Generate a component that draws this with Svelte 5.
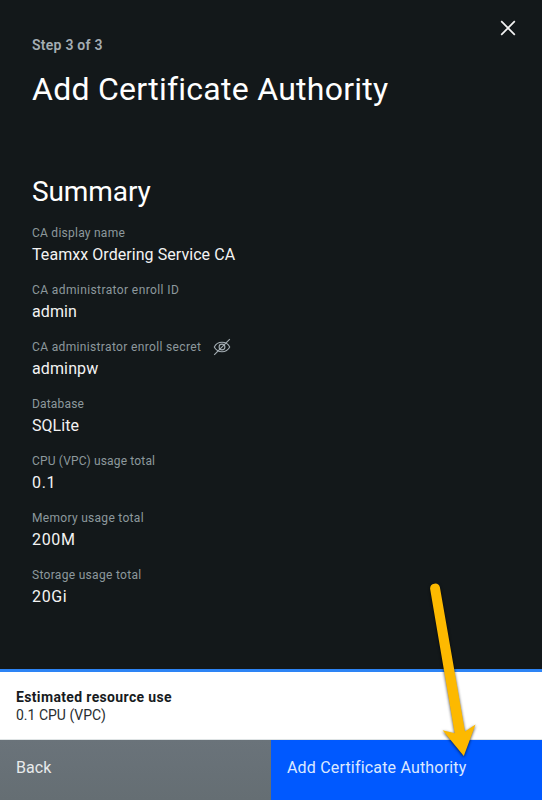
<script>
  const details = [
    { label: 'CA display name', value: 'Teamxx Ordering Service CA', ls: 0.25, vs: 0.06 },
    { label: 'CA administrator enroll ID', value: 'admin', ls: 0.4, vs: 0.1 },
    { label: 'CA administrator enroll secret', value: 'adminpw', ls: 0.35, vs: 0.12, hidden: true },
    { label: 'Database', value: 'SQLite', ls: 0.17, vs: 0.05 },
    { label: 'CPU (VPC) usage total', value: '0.1', ls: 0.16, vs: 0.7 },
    { label: 'Memory usage total', value: '200M', ls: 0.3, vs: 0.65 },
    { label: 'Storage usage total', value: '20Gi', ls: 0.31, vs: 0.65 }
  ];
</script>

<div class="panel">
  <main>
    <button class="close" aria-label="Close">
      <svg width="16" height="16" viewBox="0 0 16 16"><path d="M1.2 1.2 14.8 14.8M14.8 1.2 1.2 14.8" /></svg>
    </button>
    <p class="step">Step 3 of 3</p>
    <h1>Add Certificate Authority</h1>
    <h2>Summary</h2>
    <dl>
      {#each details as d}
        <div class="item">
          <dt>
            <span style="letter-spacing: {d.ls}px">{d.label}</span>
            {#if d.hidden}
              <svg class="eye" width="18" height="18" viewBox="0 0 18 18">
                <path d="M1.3 9C4.5 2.7 13.5 2.7 16.7 9 13.5 15.3 4.5 15.3 1.3 9Z" />
                <circle cx="9" cy="9" r="2.9" />
                <path d="M1.2 16.8 16.8 1.2" />
              </svg>
            {/if}
          </dt>
          <dd style="letter-spacing: {d.vs}px">{d.value}</dd>
        </div>
      {/each}
    </dl>
  </main>
  <section class="estimate">
    <strong>Estimated resource use</strong>
    <span>0.1 CPU (VPC)</span>
  </section>
  <footer>
    <button class="back">Back</button>
    <button class="submit">Add Certificate Authority</button>
  </footer>
  <svg class="arrow" width="60" height="190" viewBox="425 575 60 190">
    <path d="M430.1 588.8A5 5 0 0 1 439.9 587.2L465 731.6 475.5 724.6 463.8 756 442.6 730.2 454.7 733.3Z" />
  </svg>
</div>

<style>
  :global(body) { margin: 0; }
  .panel {
    position: relative;
    width: 542px;
    height: 800px;
    display: flex;
    flex-direction: column;
    overflow: hidden;
    background: #13181a;
    color: #f3f3f3;
    font-family: Roboto, "Noto Sans", sans-serif;
  }
  main {
    box-sizing: border-box;
    height: 669px;
    padding: 36px 32px 0;
  }
  p, h1, h2, dl, dd { margin: 0; }
  button { border: 0; padding: 0; font: inherit; color: inherit; text-align: left; }
  .close {
    position: absolute;
    top: 20px;
    right: 26px;
    width: 16px;
    height: 16px;
    background: none;
  }
  svg { display: block; }
  .close path { stroke: #f3f3f3; stroke-width: 1.7; fill: none; }
  .step { font-size: 14px; line-height: 18px; font-weight: 600; letter-spacing: 0.25px; color: #a4adb3; }
  h1 { margin-top: 15px; font-size: 32px; line-height: 40px; font-weight: 400; letter-spacing: 0.26px; color: #fff; white-space: nowrap; }
  h2 { margin-top: 65px; font-size: 28px; line-height: 36px; font-weight: 400; letter-spacing: -0.1px; color: #fff; }
  dl { margin-top: 15px; }
  .item { height: 57px; }
  dt { display: flex; align-items: center; height: 16px; gap: 12px; font-size: 12px; color: #8d989d; }
  dd { margin-top: 3px; font-size: 16px; line-height: 22px; }
  .eye { fill: none; stroke: #a4adb3; stroke-width: 1.1; }
  .estimate {
    box-sizing: border-box;
    height: 71px;
    padding: 16px 16px 0;
    border-top: 3px solid #2d84f5;
    border-bottom: 1px solid #dfe4e5;
    background: #fff;
    color: #272d31;
    display: flex;
    flex-direction: column;
    font-size: 14px;
    line-height: 18px;
  }
  .estimate strong { font-weight: 700; letter-spacing: 0.35px; color: #171b1e; }
  footer { display: flex; height: 60px; font-size: 16px; }
  footer button { box-sizing: border-box; width: 271px; padding: 0 16px 6px; }
  .back { background: linear-gradient(#6a737a, #656e73); color: #e7eaeb; letter-spacing: 0.1px; }
  .submit { background: #0059ff; color: #dce8ff; letter-spacing: 0.18px; }
  .arrow {
    position: absolute;
    left: 425px;
    top: 575px;
    fill: #fdb900;
    filter: drop-shadow(0 1px 1.5px rgba(0, 0, 0, 0.7));
  }
</style>
